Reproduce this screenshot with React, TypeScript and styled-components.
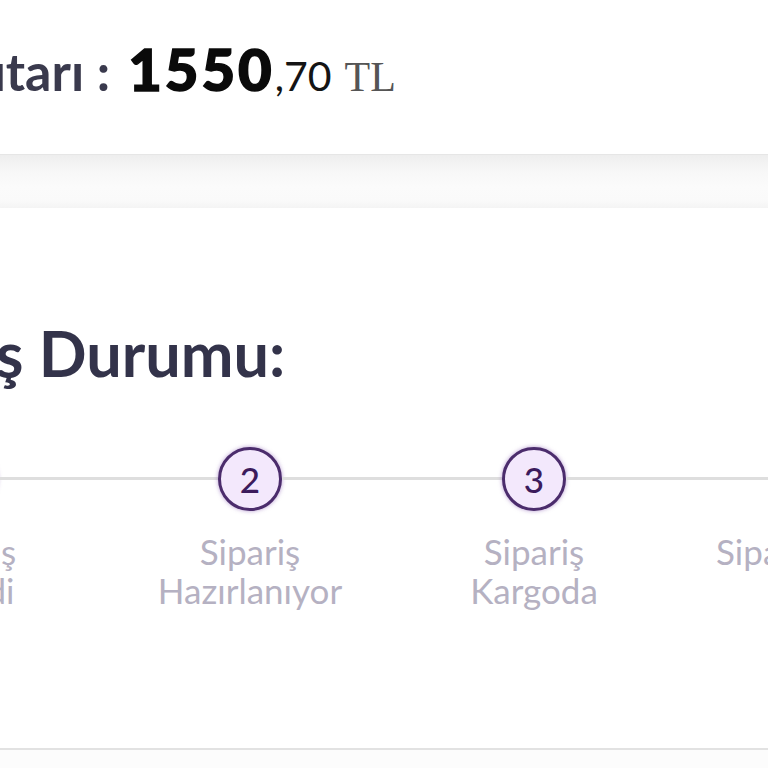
import React from 'react';
import styled, { createGlobalStyle } from 'styled-components';

const steps = [
  { no: 1, lines: ['Sipariş', 'Verildi'] },
  { no: 2, lines: ['Sipariş', 'Hazırlanıyor'] },
  { no: 3, lines: ['Sipariş', 'Kargoda'] },
  { no: 4, lines: ['Sipariş Teslim', 'Edildi'] },
];

const App = () => {
  return (
    <>
      <GlobalStyle />
      <Viewport>
        <Page>
          <SummaryBar>
            <SummaryLabel>Sipariş Tutarı :</SummaryLabel>
            <Amount>1550</Amount>
            <Decimals>,70</Decimals>
            <Currency>TL</Currency>
          </SummaryBar>
          <Divider />
          <StatusCard>
            <Heading>Sipariş Durumu:</Heading>
            <Stepper>
              {steps.map(step => (
                <Step key={step.no}>
                  <Track>
                    <Circle>{step.no}</Circle>
                  </Track>
                  <StepLabel>
                    {step.lines.map(line => (
                      <LabelLine key={line}>{line}</LabelLine>
                    ))}
                  </StepLabel>
                </Step>
              ))}
            </Stepper>
          </StatusCard>
          <Footer />
        </Page>
      </Viewport>
    </>
  );
};

const GlobalStyle = createGlobalStyle`
  html, body {
    margin: 0;
    padding: 0;
    background: #ffffff;
  }
  body {
    font-family: Lato, "Noto Sans", sans-serif;
  }
`;

const Viewport = styled.div`
  width: 768px;
  height: 768px;
  overflow: hidden;
  background: #fcfcfc;
`;

const Page = styled.div`
  width: 1200px;
  margin-left: -240px;
  display: flex;
  flex-direction: column;
`;

const SummaryBar = styled.div`
  height: 154px;
  box-sizing: border-box;
  background: #ffffff;
  display: flex;
  align-items: baseline;
  padding: 34px 0 0 26px;
  line-height: 1.2;
`;

const SummaryLabel = styled.span`
  font-size: 52px;
  font-weight: 700;
  color: #3a3a4d;
  margin-right: 18px;
`;

const Amount = styled.span`
  font-size: 58px;
  font-weight: 900;
  letter-spacing: 3px;
  color: #0a0a0a;
  -webkit-text-stroke: 1.5px #0a0a0a;
`;

const Decimals = styled.span`
  font-size: 41px;
  font-weight: 400;
  color: #141414;
`;

const Currency = styled.span`
  font-family: "Liberation Serif", serif;
  font-size: 42px;
  font-weight: 400;
  color: #555555;
  margin-left: 13px;
`;

const Divider = styled.div`
  height: 54px;
  border-top: 1px solid #e6e6e6;
  box-sizing: border-box;
  background: linear-gradient(
    #eeeeee 0%,
    #f7f7f7 30%,
    #fbfbfb 60%,
    #fafafa 85%,
    #f4f4f4 100%
  );
`;

const StatusCard = styled.div`
  background: #ffffff;
  border-bottom: 2px solid #e2e2e2;
  padding: 107px 0 138px;
  display: flex;
  flex-direction: column;
`;

const Heading = styled.h2`
  margin: 0 0 56px;
  padding-left: 78px;
  font-size: 63px;
  font-weight: 700;
  line-height: 1.2;
  color: #33334a;
`;

const Stepper = styled.div`
  display: flex;
  padding-left: 64px;
`;

const Step = styled.div`
  width: 284px;
  flex-shrink: 0;
  display: flex;
  flex-direction: column;
  align-items: center;
`;

const Track = styled.div`
  width: 100%;
  display: flex;
  align-items: center;

  &::before,
  &::after {
    content: '';
    flex: 1;
    height: 3px;
    background: #dedede;
  }
`;

const Circle = styled.div`
  width: 64px;
  height: 64px;
  box-sizing: border-box;
  border-radius: 50%;
  border: 3px solid #4b2c6c;
  background: #f3e8fc;
  box-shadow: 0 0 4px rgba(120, 70, 170, 0.55);
  display: flex;
  align-items: center;
  justify-content: center;
  font-size: 35px;
  font-weight: 500;
  color: #3c1b5c;
`;

const StepLabel = styled.div`
  margin-top: 21px;
  display: flex;
  flex-direction: column;
  align-items: center;
`;

const LabelLine = styled.span`
  white-space: nowrap;
  font-size: 35px;
  line-height: 39px;
  color: #b5b1c2;
`;

const Footer = styled.div`
  height: 40px;
  background: #fcfcfc;
`;

export default App;
